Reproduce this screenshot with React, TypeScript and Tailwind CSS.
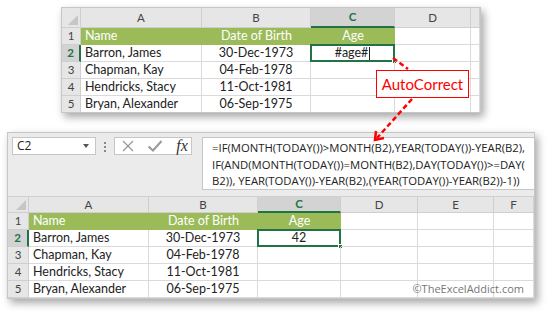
import clsx from "clsx";

const cellFont = "font-['Lato','Liberation_Sans',sans-serif]";

type Col = { label: string; w: string; sel?: boolean };

const topCols: Col[] = [
    { label: "A", w: "w-[121px]" },
    { label: "B", w: "w-[109px]" },
    { label: "C", w: "w-[84px]", sel: true },
    { label: "D", w: "w-[76px]" },
    { label: "", w: "flex-1" },
];

const bottomCols: Col[] = [
    { label: "A", w: "w-[120px]" },
    { label: "B", w: "w-[109px]" },
    { label: "C", w: "w-[83px]", sel: true },
    { label: "D", w: "w-[77px]" },
    { label: "E", w: "w-[76px]" },
    { label: "F", w: "flex-1" },
];

const people = [
    ["Barron, James", "30-Dec-1973"],
    ["Chapman, Kay", "04-Feb-1978"],
    ["Hendricks, Stacy", "11-Oct-1981"],
    ["Bryan, Alexander", "06-Sep-1975"],
];

function Sheet({ cols, rowNumW, headH, ageCell, edit }: { cols: Col[]; rowNumW: string; headH: string; ageCell: string; edit: boolean }) {
    return (
        <div className={clsx("flex flex-col text-[12.5px]", cellFont)}>
            {/* column letters */}
            <div className={clsx("flex bg-[#e6e6e6] text-[#444]", headH)}>
                <div className={clsx(rowNumW, "relative border-r border-b border-[#cfcfcf]")}>
                    <div className="absolute right-[2px] bottom-[2px] w-0 h-0 border-l-[10px] border-l-transparent border-b-[10px] border-b-[#c6c6c6]" />
                </div>
                {cols.map((c, i) => (
                    <div
                        key={i}
                        className={clsx(
                            c.w,
                            "flex items-center justify-center text-[11.5px] border-r border-[#cfcfcf]",
                            c.sel ? "bg-[#d3d3d3] text-[#217346] font-bold border-b-2 border-b-[#217346]" : "border-b"
                        )}
                    >
                        {c.label}
                    </div>
                ))}
            </div>

            {/* header row */}
            <div className="flex h-[17px]">
                <div className={clsx(rowNumW, "bg-[#e6e6e6] text-[#444] text-[11.5px] flex items-center justify-center border-r border-b border-[#cfcfcf]")}>1</div>
                {cols.map((c, i) => {
                    const green = i < 3;
                    return (
                        <div
                            key={i}
                            className={clsx(
                                c.w,
                                "flex items-center px-[4px] leading-none",
                                green ? "bg-[#9bbb59] text-white" : "border-r border-b border-[#dadada]",
                                i === 0 ? "justify-start" : "justify-center"
                            )}
                        >
                            {i === 0 ? "Name" : i === 1 ? "Date of Birth" : i === 2 ? "Age" : ""}
                        </div>
                    );
                })}
            </div>

            {people.map((p, r) => (
                <div key={r} className="flex h-[17px]">
                    <div
                        className={clsx(
                            rowNumW,
                            "text-[11.5px] flex items-center justify-center border-b border-[#cfcfcf]",
                            r === 0 ? "bg-[#d3d3d3] text-[#217346] font-bold border-r-2 border-r-[#217346]" : "bg-[#e6e6e6] text-[#444] border-r"
                        )}
                    >
                        {r + 2}
                    </div>
                    {cols.map((c, i) => (
                        <div
                            key={i}
                            className={clsx(
                                c.w,
                                "relative flex items-center px-[4px] leading-none text-[#222] border-r border-b border-[#dadada]",
                                i === 0 ? "justify-start" : "justify-center"
                            )}
                        >
                            {i === 0 ? p[0] : i === 1 ? p[1] : ""}
                            {i === 2 && r === 0 && (
                                <div className="absolute -left-px -top-px -right-px -bottom-px border-2 border-[#217346] flex items-center justify-center">
                                    <span className="text-[#222]">{ageCell}</span>
                                    {edit && <span className="ml-[1px] w-px h-[13px] bg-[#222]" />}
                                    <div className="absolute -right-[4px] -bottom-[4px] w-[5px] h-[5px] bg-[#217346] border border-white" />
                                </div>
                            )}
                        </div>
                    ))}
                </div>
            ))}
        </div>
    );
}

function FormulaBar() {
    return (
        <div className="flex items-start h-[64px] bg-[#ebebeb] pl-[4px] pt-[4px] border-b border-[#cfcfcf]">
            <div className="w-[86px] h-[18px] bg-white border border-[#c6c6c6] flex items-center justify-between pl-[4px] pr-[6px] text-[12px] text-[#222] font-['Open_Sans','Liberation_Sans',sans-serif]">
                <span>C2</span>
                <span className="w-0 h-0 border-l-[3px] border-r-[3px] border-t-[4px] border-l-transparent border-r-transparent border-t-[#555]" />
            </div>
            <div className="flex flex-col gap-[2px] pt-[5px] w-[19px] items-center">
                <span className="w-[2px] h-[2px] bg-[#888]" />
                <span className="w-[2px] h-[2px] bg-[#888]" />
                <span className="w-[2px] h-[2px] bg-[#888]" />
            </div>
            <div className="w-[80px] h-[18px] bg-white border border-[#c6c6c6] flex items-center pl-[6px]">
                <svg width="14" height="14" viewBox="0 0 14 14">
                    <path d="M2 2 L12 12 M12 2 L2 12" stroke="#999" strokeWidth="1.3" fill="none" />
                </svg>
                <svg className="ml-[12px]" width="16" height="14" viewBox="0 0 16 14">
                    <path d="M1.5 7.5 L6 11.5 L14.5 2" stroke="#999" strokeWidth="2" fill="none" />
                </svg>
                <span className="ml-[13px] font-['Liberation_Serif',serif] italic text-[16px] text-[#333] leading-none">fx</span>
            </div>
            <div className="ml-[10px] flex-1 h-[53px] bg-white border border-[#c6c6c6] border-r-0 px-[9px] pt-[2px] text-[11.3px] leading-[16.5px] text-[#222] font-['Open_Sans','Liberation_Sans',sans-serif] whitespace-nowrap">
                <div>=IF(MONTH(TODAY())&gt;MONTH(B2),YEAR(TODAY())-YEAR(B2),</div>
                <div>IF(AND(MONTH(TODAY())=MONTH(B2),DAY(TODAY())&gt;=DAY(</div>
                <div>B2)), YEAR(TODAY())-YEAR(B2),(YEAR(TODAY())-YEAR(B2))-1))</div>
            </div>
        </div>
    );
}

export default function App() {
    return (
        <div className="relative w-[555px] h-[318px] bg-white overflow-hidden">
            <div className="flex flex-col">
                <div className="ml-[61px] mt-[7px] w-[420px] h-[106px] overflow-hidden bg-white border border-[#c6c6c6] shadow-[3px_4px_8px_rgba(0,0,0,0.35)]">
                    <Sheet cols={topCols} rowNumW="w-[19px]" headH="h-[20px]" ageCell="#age#" edit />
                </div>

                <div className="relative ml-[7px] mt-[19px] w-[528px] h-[167px] overflow-hidden bg-white border border-[#c6c6c6] shadow-[3px_4px_8px_rgba(0,0,0,0.35)]">
                    <FormulaBar />
                    <Sheet cols={bottomCols} rowNumW="w-[21px]" headH="h-[16px]" ageCell="42" edit={false} />
                    <span className="absolute right-[10px] bottom-[1px] text-[11px] text-[#777] font-['Open_Sans','Liberation_Sans',sans-serif]">
                        ©TheExcelAddict.com
                    </span>
                </div>
            </div>

            {/* AutoCorrect callout */}
            <div className={clsx("absolute left-[376px] top-[70px] w-[93px] h-[28px] bg-white border border-[#ff0000] flex items-center justify-center text-[15px] text-[#ff0000]", cellFont)}>
                AutoCorrect
            </div>

            <svg className="absolute inset-0 pointer-events-none" width="555" height="318">
                <path d="M393 58 L408 69" stroke="#ff0000" strokeWidth="2.5" strokeDasharray="5 3" fill="none" />
                <path d="M412 99 L377 138" stroke="#ff0000" strokeWidth="2.5" strokeDasharray="5 3" fill="none" />
                <path d="M376 131 L375 140 L384 138" stroke="#ff0000" strokeWidth="2.5" fill="none" />
            </svg>
        </div>
    );
}
